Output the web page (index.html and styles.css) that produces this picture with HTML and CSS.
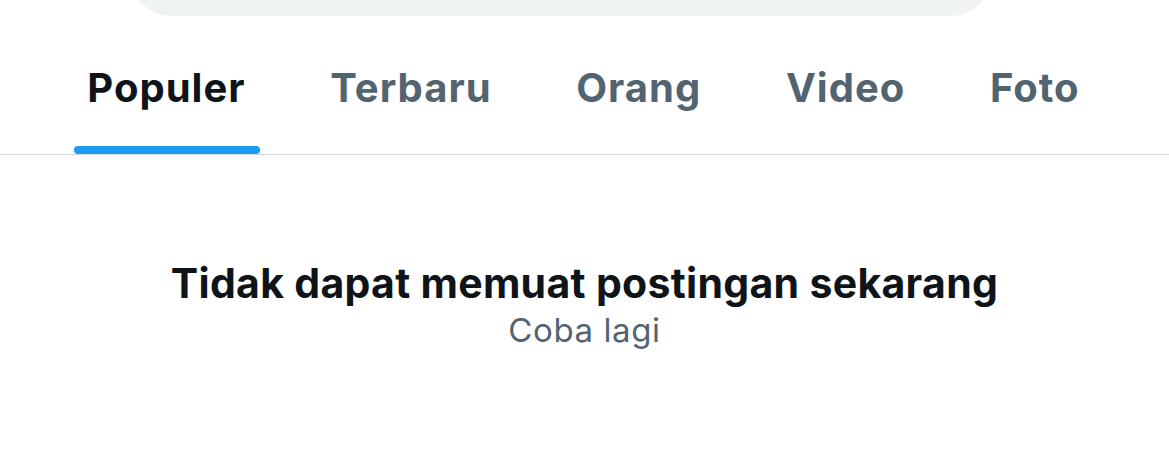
FILE: index.html
```html
<!DOCTYPE html>
<html>
<head>
    <title>Pencarian</title>
<link rel="stylesheet" href="styles.css">
</head>
<body>
  <div class="search-wrap">
    <div class="search-bar"></div>
  </div>
  <nav class="tabs">
    <a class="tab active"><span class="tab-inner"><span class="tab-label">Populer</span><span class="tab-line"></span></span></a>
    <a class="tab"><span class="tab-inner"><span class="tab-label">Terbaru</span></span></a>
    <a class="tab"><span class="tab-inner"><span class="tab-label">Orang</span></span></a>
    <a class="tab"><span class="tab-inner"><span class="tab-label">Video</span></span></a>
    <a class="tab"><span class="tab-inner"><span class="tab-label">Foto</span></span></a>
  </nav>
  <div class="empty">
    <div class="empty-title">Tidak dapat memuat postingan sekarang</div>
    <div class="empty-retry">Coba lagi</div>
  </div>
</body>
</html>
```

FILE: styles.css
```css
body {
  margin: 0;
  background-color: white;
  font-family: Inter, "Noto Sans", sans-serif;
  color: #0f1419;
  overflow: hidden;
}
.search-wrap {
  padding: 0 178px 0 131px;
}
.search-bar {
  height: 80px;
  margin-top: -64px;
  border-radius: 40px;
  background-color: #eff3f4;
}
.tabs {
  display: flex;
  height: 138px;
  padding: 0 47px 0 45px;
  border-bottom: 1px solid #cfd9de;
}
.tab {
  flex: 1 1 auto;
  display: flex;
  justify-content: center;
  padding: 0 16px;
  color: #536471;
  font-size: 40px;
  font-weight: 700;
  letter-spacing: 1px;
}
.tab.active {
  color: #0f1419;
}
.tab-inner {
  display: flex;
  flex-direction: column;
}
.tab-label {
  margin-top: 48px;
  line-height: 48px;
  white-space: nowrap;
}
.tab-line {
  margin: auto -14px 0 -13px;
  height: 8px;
  border-radius: 4px;
  background-color: #1d9bf0;
}
.empty {
  padding-top: 104px;
  text-align: center;
}
.empty-title {
  font-size: 41px;
  font-weight: 700;
  line-height: 48px;
  letter-spacing: 0.3px;
}
.empty-retry {
  margin-top: 3px;
  font-size: 33px;
  line-height: 40px;
  letter-spacing: 0.6px;
  color: #536471;
}
```
